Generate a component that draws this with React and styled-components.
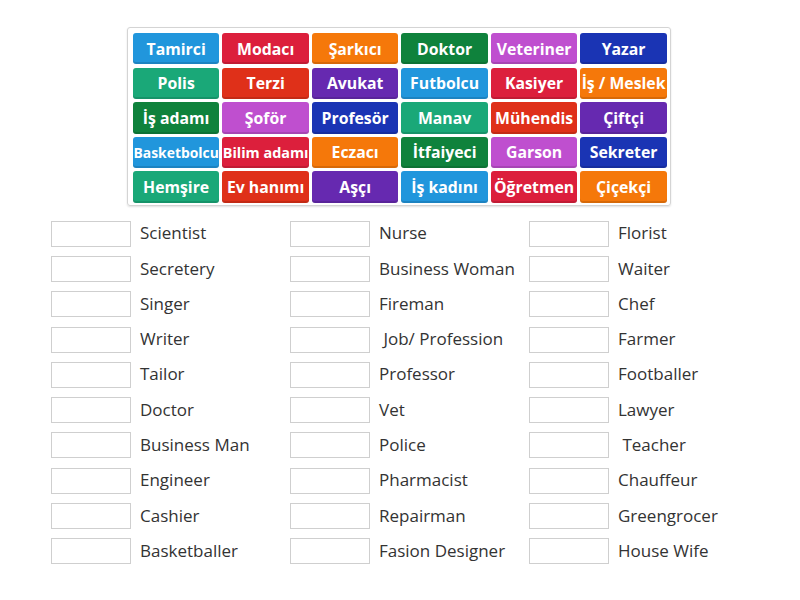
import React from 'react';
import styled, { createGlobalStyle } from 'styled-components';

const PALETTE = [
  '#2196dc',
  '#dc1f3c',
  '#f5780a',
  '#0f823c',
  '#bf4fcf',
  '#1a34b4',
  '#1aa878',
  '#df3019',
  '#6629b0',
];

const TILES = [
  'Tamirci', 'Modacı', 'Şarkıcı', 'Doktor', 'Veteriner', 'Yazar',
  'Polis', 'Terzi', 'Avukat', 'Futbolcu', 'Kasiyer', 'İş / Meslek',
  'İş adamı', 'Şoför', 'Profesör', 'Manav', 'Mühendis', 'Çiftçi',
  'Basketbolcu', 'Bilim adamı', 'Eczacı', 'İtfaiyeci', 'Garson', 'Sekreter',
  'Hemşire', 'Ev hanımı', 'Aşçı', 'İş kadını', 'Öğretmen', 'Çiçekçi',
];

// long words get shrunk to fit the tile
const FONT_SIZES = {
  'Basketbolcu': 13.9,
  'Bilim adamı': 14.4,
};

const ANSWERS = [
  'Scientist', 'Secretery', 'Singer', 'Writer', 'Tailor',
  'Doctor', 'Business Man', 'Engineer', 'Cashier', 'Basketballer',
  'Nurse', 'Business Woman', 'Fireman', ' Job/ Profession', 'Professor',
  'Vet', 'Police', 'Pharmacist', 'Repairman', 'Fasion Designer',
  'Florist', 'Waiter', 'Chef', 'Farmer', 'Footballer',
  'Lawyer', ' Teacher', 'Chauffeur', 'Greengrocer', 'House Wife',
];

const GlobalStyle = createGlobalStyle`
  body {
    margin: 0;
    background: #ffffff;
    font-family: "Open Sans", "Liberation Sans", sans-serif;
  }
`;

function App() {
  return (
    <Page>
      <GlobalStyle />
      <TileBoard>
        {TILES.map((word, i) => (
          <Tile key={word} color={PALETTE[i % PALETTE.length]} size={FONT_SIZES[word] || 15.8}>
            {word}
          </Tile>
        ))}
      </TileBoard>
      <Answers>
        {ANSWERS.map(label => (
          <AnswerRow key={label}>
            <DropBox />
            <Label>{label}</Label>
          </AnswerRow>
        ))}
      </Answers>
    </Page>
  );
}

const Page = styled.div`
  width: 800px;
  padding-top: 27px;
`;

const TileBoard = styled.div`
  box-sizing: border-box;
  width: 544px;
  margin: 0 auto 0 127px;
  padding: 5px 4px 2px 5px;
  display: grid;
  grid-template-columns: repeat(6, 86.3px);
  grid-auto-rows: 31.4px;
  gap: 3.2px 3.2px;
  border: 1px solid #d4d4d4;
  border-radius: 3px;
  box-shadow: 0 1px 2px rgba(0, 0, 0, 0.12);
`;

const Tile = styled.div`
  display: flex;
  align-items: center;
  justify-content: center;
  background: ${props => props.color};
  border-radius: 3px;
  box-shadow: inset 0 -2px 0 rgba(0, 0, 0, 0.12);
  color: #ffffff;
  font-weight: 700;
  font-size: ${props => props.size}px;
  white-space: nowrap;
  overflow: hidden;
`;

const Answers = styled.div`
  margin: 15px 0 0 51px;
  display: grid;
  grid-auto-flow: column;
  grid-template-columns: repeat(3, 239px);
  grid-template-rows: repeat(10, 26px);
  row-gap: 9.3px;
`;

const AnswerRow = styled.div`
  display: flex;
  align-items: center;
  gap: 9px;
`;

const DropBox = styled.div`
  box-sizing: border-box;
  width: 80px;
  height: 26px;
  flex-shrink: 0;
  border: 1px solid #cfcfcf;
  background: #ffffff;
`;

const Label = styled.span`
  color: #333333;
  font-size: 17px;
  white-space: pre;
  margin-top: -2px;
`;

export default App;
